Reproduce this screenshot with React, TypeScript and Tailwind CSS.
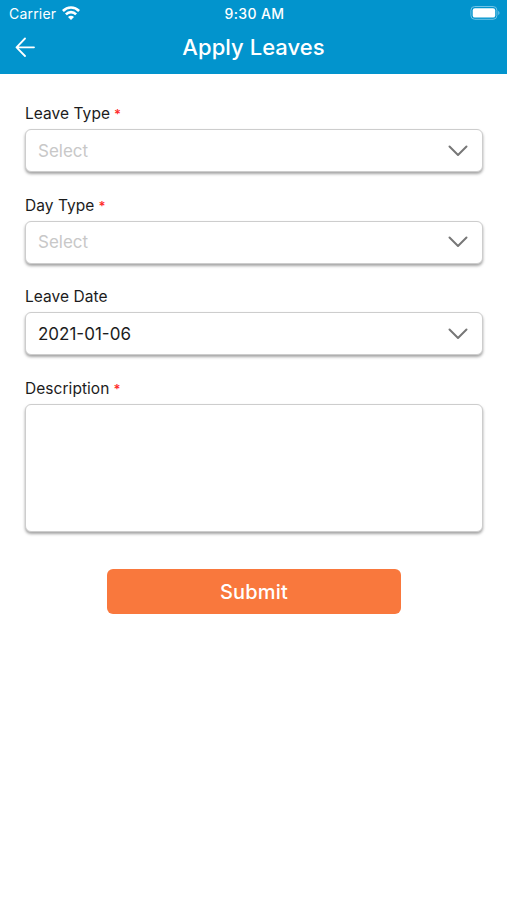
import React, { useState } from 'react'

type FieldProps = {
    label: string
    required?: boolean
    children: React.ReactNode
}

function Field(props: FieldProps) {
    return (
        <div className="w-full">
            <label className="flex h-[27px] items-start text-[15.5px] leading-[24.5px] tracking-[0.05px] text-[#1c1c1c]">
                {props.label}
                {props.required && (
                    <span className="ml-1 text-[13px] leading-[24px] font-semibold text-[#ff2a2a]">
                        *
                    </span>
                )}
            </label>
            {props.children}
        </div>
    )
}

type SelectProps = {
    value: string
    placeholder?: string
}

function SelectBox(props: SelectProps) {
    return (
        <button
            type="button"
            className="flex h-[43px] w-full items-center justify-between rounded-[6px] border border-[#cdcdcd] bg-white pr-[14px] pl-3 text-left shadow-[0_2px_3px_rgba(0,0,0,0.36)]"
        >
            {props.value ? (
                <span className="pt-0.5 text-[17px] text-[#1c1c1c]">
                    {props.value}
                </span>
            ) : (
                <span className="pt-0.5 text-[17px] text-[#c8c8c8]">
                    {props.placeholder}
                </span>
            )}
            <svg
                className="h-3 w-5"
                viewBox="0 0 20 12"
                fill="none"
                stroke="#777777"
                strokeWidth="2"
                strokeLinecap="round"
                strokeLinejoin="round"
            >
                <path d="M1.5 1.5 10 10 18.5 1.5" />
            </svg>
        </button>
    )
}

function StatusBar() {
    return (
        <div className="grid h-[27px] grid-cols-3 items-center pr-[7px] pl-[9px] text-[14px] leading-[27px]">
            <div className="flex items-center gap-[6px]">
                <span className="tracking-[0.2px]">Carrier</span>
                {/* wifi */}
                <svg
                    className="mb-0.5 h-[14px] w-[18px]"
                    viewBox="0 0 18 14"
                    fill="none"
                    stroke="currentColor"
                    strokeWidth="2.6"
                >
                    <path d="M0.9 5C5.4 0.4 12.6 0.4 17.1 5" />
                    <path d="M3.9 8.3C6.8 5.4 11.2 5.4 14.1 8.3" />
                    <path
                        d="M9 13.9 6 10.9C7.7 9.3 10.3 9.3 12 10.9Z"
                        fill="currentColor"
                        stroke="none"
                    />
                </svg>
            </div>
            <span className="text-center text-[14px] font-medium tracking-[0.4px]">
                9:30 AM
            </span>
            {/* battery */}
            <svg
                className="mb-0.5 h-[14px] w-[30px] justify-self-end"
                viewBox="0 0 30 14"
            >
                <rect
                    x="0.9"
                    y="0.5"
                    width="26"
                    height="12.8"
                    rx="3.8"
                    fill="none"
                    stroke="#6fc3e6"
                />
                <rect
                    x="2.7"
                    y="2.2"
                    width="22.5"
                    height="9.4"
                    rx="2.2"
                    fill="#ffffff"
                />
                <path d="M28.2 4.7C30 5.6 30 8.2 28.2 9.1Z" fill="#6fc3e6" />
            </svg>
        </div>
    )
}

function App() {
    const [description, setDescription] = useState('')

    return (
        <div className="flex min-h-screen w-full flex-col bg-white font-['Inter','Liberation_Sans',sans-serif]">
            <header className="h-[74px] bg-[#0294cd] text-white">
                <StatusBar />
                <div className="grid h-10 grid-cols-[40px_1fr_40px] items-center">
                    <button className="pl-[15px]">
                        <svg
                            className="h-5 w-5"
                            viewBox="0 0 20 20"
                            fill="none"
                            stroke="currentColor"
                            strokeWidth="1.8"
                            strokeLinecap="round"
                            strokeLinejoin="round"
                        >
                            <path d="M19 10.3H1.5M10 1.5 1.5 10.3 10 19" />
                        </svg>
                    </button>
                    <h1 className="text-center text-[22px] font-medium tracking-[0.05px]">
                        Apply Leaves
                    </h1>
                </div>
            </header>

            {/* form */}
            <form className="flex flex-col items-center gap-[21.7px] pt-7 pr-[24px] pl-[25px]">
                <Field label="Leave Type" required>
                    <SelectBox value="" placeholder="Select" />
                </Field>
                <Field label="Day Type" required>
                    <SelectBox value="" placeholder="Select" />
                </Field>
                <Field label="Leave Date">
                    <SelectBox value="2021-01-06" />
                </Field>
                <Field label="Description" required>
                    <textarea
                        value={description}
                        onChange={(event) => setDescription(event.target.value)}
                        className="block h-[128px] w-full resize-none rounded-[6px] border border-[#cdcdcd] bg-white p-3 text-[17px] shadow-[0_2px_3px_rgba(0,0,0,0.36)] outline-none"
                    />
                </Field>
                <button
                    type="button"
                    className="mt-[15px] h-[45px] w-[294px] rounded-[6px] bg-[#f9783d] pt-0.5 text-[20px] font-medium tracking-[0.2px] text-white"
                >
                    Submit
                </button>
            </form>
        </div>
    )
}

export default App
